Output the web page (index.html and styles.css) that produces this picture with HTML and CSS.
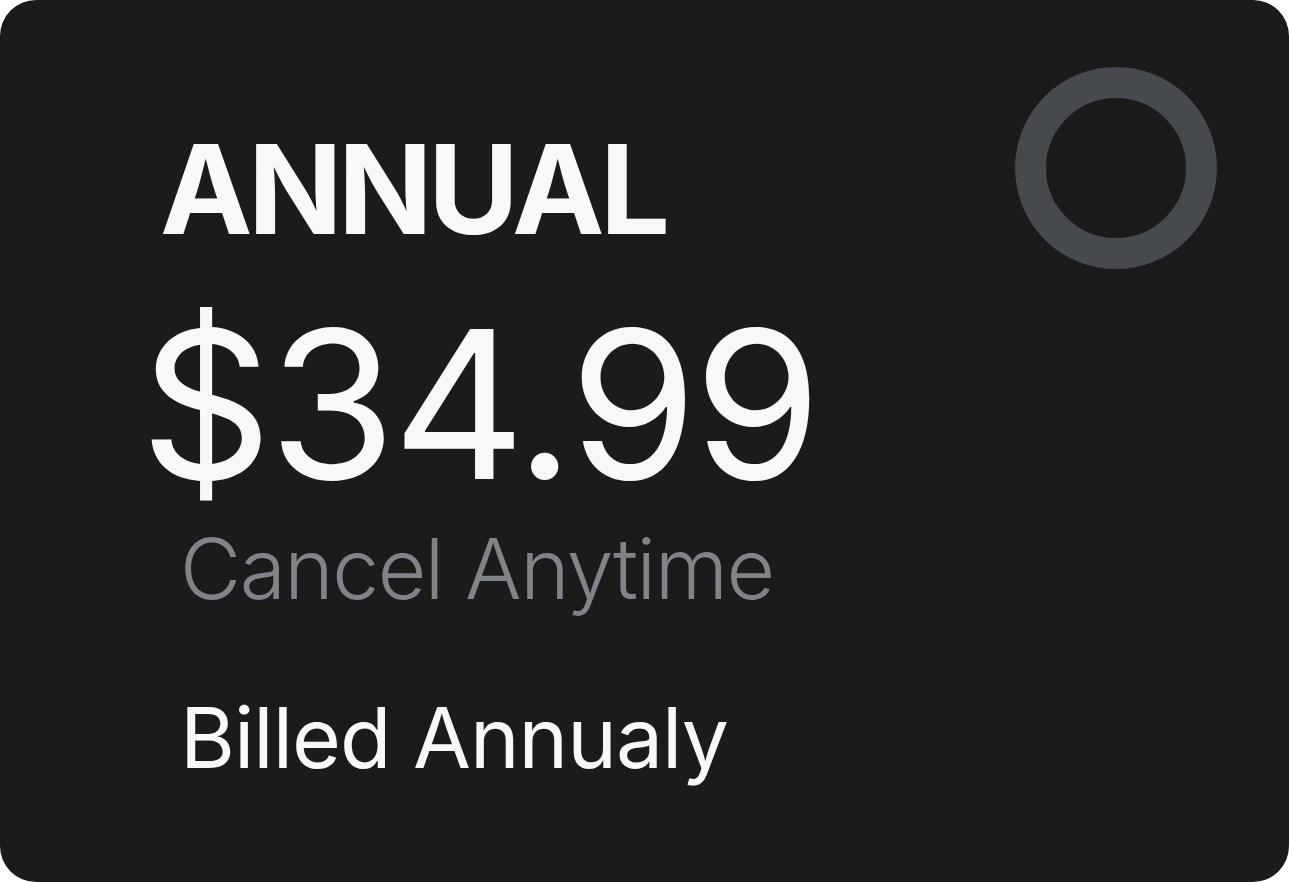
FILE: index.html
```html
<!DOCTYPE html>
<html lang="en">
<head>
<meta charset="utf-8">
<title>Annual plan</title>
<link rel="stylesheet" href="styles.css">
</head>
<body>
  <div class="card">
    <div class="card-head">
      <h1 class="plan-name">ANNUAL</h1>
      <div class="radio" aria-hidden="true"></div>
    </div>
    <div class="price">$34.99</div>
    <div class="note">Cancel Anytime</div>
    <div class="billing">Billed Annualy</div>
  </div>
</body>
</html>
```
FILE: styles.css
```css
* { box-sizing: border-box; }
html, body {
  margin: 0;
  padding: 0;
  background: #ffffff;
}
body {
  font-family: "Inter", "Noto Sans", "Liberation Sans", sans-serif;
}
.card {
  width: 1289px;
  height: 882px;
  background: #1b1b1b;
  border-radius: 36px;
  padding: 67px 72px 0 150px;
  display: flex;
  flex-direction: column;
  overflow: hidden;
}
.card-head {
  display: flex;
  justify-content: space-between;
  align-items: flex-start;
}
.plan-name {
  margin: 60px 0 0 0;
  font-size: 124px;
  line-height: 1;
  font-weight: 700;
  color: #f8f8f8;
  padding-left: 10px;
  letter-spacing: -4.5px;
}
.radio {
  width: 202px;
  height: 202px;
  border-radius: 50%;
  border: 31px solid #464a4f;
  flex: none;
}
.price {
  margin: 48px 0 0 -10px;
  font-size: 206px;
  line-height: 0.85;
  font-weight: 400;
  color: #f8f8f8;
  letter-spacing: -3.5px;
}
.note {
  margin-top: 35px;
  padding-left: 30px;
  font-size: 84px;
  line-height: 1;
  font-weight: 300;
  color: #80838a;
  letter-spacing: -1.5px;
}
.billing {
  margin-top: 85px;
  padding-left: 30px;
  font-size: 84px;
  line-height: 1;
  font-weight: 400;
  color: #f8f8f8;
  letter-spacing: -1px;
}
```
